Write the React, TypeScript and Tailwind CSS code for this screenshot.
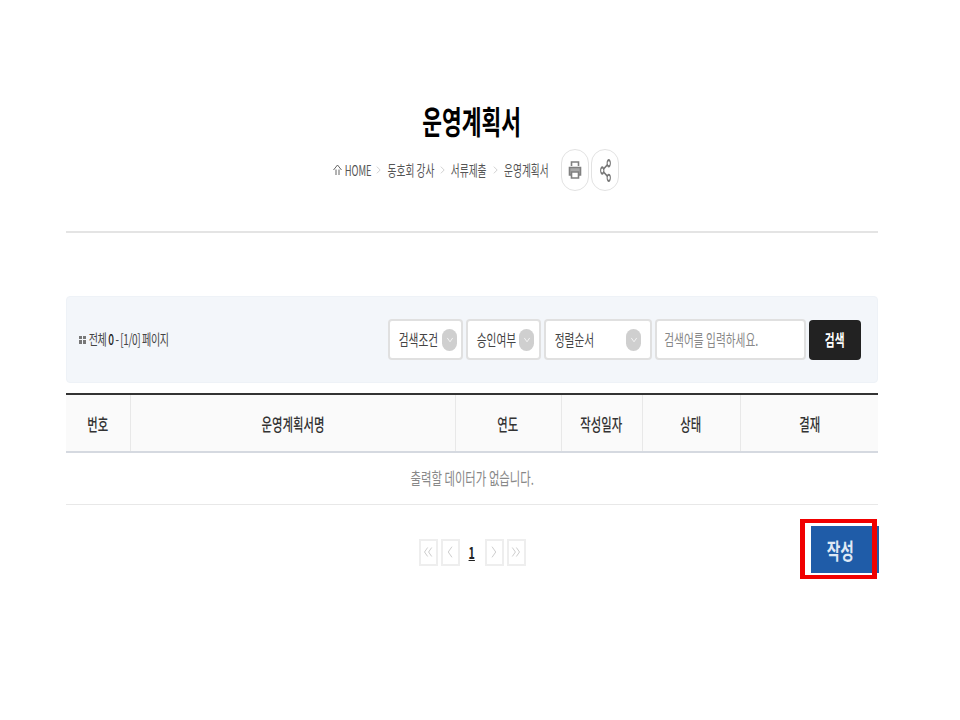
import { ChevronDown, ChevronLeft, ChevronRight, ChevronsLeft, ChevronsRight, Share2 } from 'lucide-react';
import type { ReactNode } from 'react';

// the whole reference is squeezed horizontally, so text gets a fixed box and a scale-x
function Sq({ className, inner, children }: { className: string; inner: string; children: ReactNode }) {
    return (
        <div className={`flex shrink-0 justify-center ${className}`}>
            <span className={`shrink-0 whitespace-nowrap scale-x-[0.67] ${inner}`}>{children}</span>
        </div>
    );
}

function Crumb() {
    return (
        <svg viewBox="0 0 6 10" className="h-[10px] w-[5px] shrink-0 text-[#bbb]" fill="none" stroke="currentColor" strokeWidth="0.8">
            <path d="M1 1l4 4-4 4" />
        </svg>
    );
}

function SelectBox({ label, className, textBox }: { label: string; className: string; textBox: string }) {
    return (
        <div className={`flex h-[41px] items-center rounded-[4px] border-2 border-[#e0e0e0] bg-white ${className}`}>
            <Sq className={`-mt-[2px] ${textBox}`} inner="text-[16px] text-[#444]">{label}</Sq>
            <div className="ml-auto flex h-[22px] w-[15px] items-center justify-center rounded-full bg-[#cfcfcf]">
                <ChevronDown className="h-[14px] w-[10px] text-white" preserveAspectRatio="none" strokeWidth={1.5} />
            </div>
        </div>
    );
}

function PageBox({ children }: { children: ReactNode }) {
    return (
        <div className="flex h-[27px] w-[19px] items-center justify-center border-2 border-[#eeeeee] bg-white text-[#c4c4c4]">
            {children}
        </div>
    );
}

const columns = [
    { label: '번호', width: 'w-[64px]' },
    { label: '운영계획서명', width: 'w-[325px]' },
    { label: '연도', width: 'w-[106px]' },
    { label: '작성일자', width: 'w-[81px]' },
    { label: '상태', width: 'w-[98px]' },
    { label: '결재', width: 'w-[138px]' },
];

export default function App() {
    return (
        <div className="min-h-[720px] bg-white font-['Noto_Sans_CJK_KR','Noto_Sans',sans-serif] text-[#222]">
            <div className="ml-[66px] w-[812px] pt-[99px]">
                <div className="flex h-[42px] items-center justify-center">
                    <Sq className="w-[98px]" inner="text-[32px] font-bold leading-none text-black">운영계획서</Sq>
                </div>

                <div className="mt-[8px] flex h-[42px] items-center justify-center pl-[8px] text-[#555]">
                    <svg viewBox="0 0 9 12" className="h-[12px] w-[9px] shrink-0" fill="none" stroke="currentColor" strokeWidth="0.9">
                        <path d="M0.5 6L4.5 1l4 5M3 5.5V11M6 5.5V11" />
                    </svg>
                    <Sq className="ml-[3px] w-[26px]" inner="text-[14px]">HOME</Sq>
                    <div className="ml-[5px] mr-[6px]"><Crumb /></div>
                    <Sq className="w-[47px]" inner="text-[14.5px]">동호회 강사</Sq>
                    <div className="mx-[6px]"><Crumb /></div>
                    <Sq className="w-[36px]" inner="text-[14.5px]">서류제출</Sq>
                    <div className="mx-[6px]"><Crumb /></div>
                    <Sq className="w-[45px]" inner="text-[14.5px]">운영계획서</Sq>
                    <div className="ml-[12px] flex h-[42px] w-[28px] items-center justify-center rounded-full border border-[#e2e2e2]">
                        <svg viewBox="0 0 14 20" className="h-[20px] w-[14px]" fill="none" stroke="#808080" strokeWidth="1.6">
                            <path d="M3.5 6V2h7v4" />
                            <path d="M3 15H1.5V7.5h11V15H11" fill="#a8a8a8" />
                            <path d="M3.5 12h7v6h-7z" fill="#fff" />
                        </svg>
                    </div>
                    <div className="ml-[2px] flex h-[42px] w-[28px] items-center justify-center rounded-full border border-[#e2e2e2]">
                        <Share2 className="h-[25px] w-[13px] text-[#777]" preserveAspectRatio="none" strokeWidth={2} />
                    </div>
                </div>

                <div className="mt-[40px] h-[2px] bg-[#e4e4e4]" />

                <div className="mt-[63px] flex h-[87px] items-center rounded-[4px] border border-[#eef2f7] bg-[#f3f6fa] pl-[12px] pr-[16px]">
                    <div className="grid h-[8px] w-[7px] grid-cols-2 gap-[1px]">
                        <span className="bg-[#777]" />
                        <span className="bg-[#777]" />
                        <span className="bg-[#777]" />
                        <span className="bg-[#777]" />
                    </div>
                    <Sq className="ml-[4px] w-[78px]" inner="text-[15px] tracking-[-0.6px] text-[#444]">
                        전체 <b className="font-medium text-[#222]">0</b> - [1/0] 페이지
                    </Sq>

                    <div className="ml-auto flex items-center gap-[3px]">
                        <SelectBox label="검색조건" className="w-[75px] pl-[9px] pr-[4px]" textBox="w-[39px]" />
                        <SelectBox label="승인여부" className="w-[75px] pl-[9px] pr-[5px]" textBox="w-[39px]" />
                        <SelectBox label="정렬순서" className="w-[108px] pl-[9px] pr-[9px]" textBox="w-[39px]" />
                        <div className="flex h-[41px] w-[151px] items-center rounded-[4px] border-2 border-[#e0e0e0] bg-white pl-[4px]">
                            <Sq className="-mt-[2px] w-[100px]" inner="text-[16px] text-[#888]">검색어를 입력하세요.</Sq>
                        </div>
                        <div className="flex h-[40px] w-[52px] items-center justify-center rounded-[4px] bg-[#222]">
                            <Sq className="-mt-[2px] w-[22px]" inner="text-[16px] font-bold text-white">검색</Sq>
                        </div>
                    </div>
                </div>

                <table className="mt-[10px] w-full table-fixed border-collapse">
                    <thead>
                        <tr className="h-[58px] border-t-2 border-b-2 border-t-[#333] border-b-[#d5d9e0] bg-[#fafafa]">
                            {columns.map((col, i) => (
                                <th key={col.label} className={`${col.width} p-0 pt-[1px] font-medium ${i > 0 ? 'border-l border-[#e8e8e8]' : ''}`}>
                                    <Sq className="w-full" inner="text-[17px] font-medium text-[#333]">{col.label}</Sq>
                                </th>
                            ))}
                        </tr>
                    </thead>
                    <tbody>
                        <tr className="h-[52px] border-b border-[#e8e8e8]">
                            <td colSpan={6} className="p-0 pb-[2px]">
                                <Sq className="w-full" inner="text-[17px] text-[#888]">출력할 데이터가 없습니다.</Sq>
                            </td>
                        </tr>
                    </tbody>
                </table>

                <div className="mt-[21px] grid grid-cols-[1fr_auto_1fr] items-start">
                    <div />
                    <div className="mt-[13px] flex items-center gap-[3px]">
                        <PageBox><ChevronsLeft className="h-[20px] w-[14px] shrink-0" preserveAspectRatio="none" strokeWidth={1.2} /></PageBox>
                        <PageBox><ChevronLeft className="h-[20px] w-[14px] shrink-0" preserveAspectRatio="none" strokeWidth={1.2} /></PageBox>
                        <div className="flex w-[19px] justify-center">
                            <Sq className="w-[8px]" inner="text-[16px] font-bold underline text-[#222]">1</Sq>
                        </div>
                        <PageBox><ChevronRight className="h-[20px] w-[14px] shrink-0" preserveAspectRatio="none" strokeWidth={1.2} /></PageBox>
                        <PageBox><ChevronsRight className="h-[20px] w-[14px] shrink-0" preserveAspectRatio="none" strokeWidth={1.2} /></PageBox>
                    </div>
                    <div className="flex justify-end">
                        <div className="relative -mr-[1px] flex h-[47px] w-[68px] items-center justify-center bg-[#1f5ca8]">
                            <Sq className="w-[32px] -translate-x-[5px]" inner="text-[22px] font-bold text-[#dfe9f5]">작성</Sq>
                            {/* annotation drawn over the button */}
                            <div className="absolute -left-[11px] -top-[7px] h-[60px] w-[77px] border-x-[5px] border-y-[4px] border-[#f00000]" />
                        </div>
                    </div>
                </div>
            </div>
        </div>
    );
}
